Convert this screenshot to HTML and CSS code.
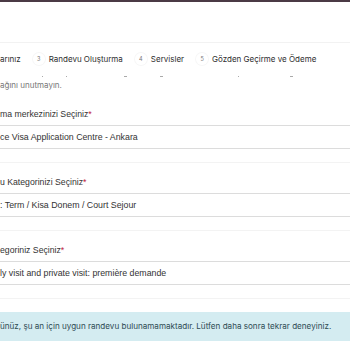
FILE: index.html
```html
<!DOCTYPE html>
<html>
<head>
<meta charset="utf-8">
<link rel="stylesheet" href="styles.css">
</head>
<body>
<div class="topbar"></div>
<div class="header"></div>
<div class="steps">
  <span class="step-label">arınız</span>
  <span class="step"><span class="num">3</span><span class="step-label">Randevu Oluşturma</span></span>
  <span class="step"><span class="num">4</span><span class="step-label">Servisler</span></span>
  <span class="step"><span class="num">5</span><span class="step-label">Gözden Geçirme ve Ödeme</span></span>
</div>
<div class="ticks">
  <span class="tick t1"></span><span class="tick t2"></span><span class="tick t3"></span><span class="tick t4"></span><span class="tick t5"></span><span class="tick t6"></span>
</div>
<div class="note">ağını unutmayın.</div>

<div class="field">
  <div class="label">ma merkezinizi Seçiniz<span class="req">*</span></div>
  <div class="select">ce Visa Application Centre - Ankara</div>
</div>
<div class="sep"></div>
<div class="field">
  <div class="label">u Kategorinizi Seçiniz<span class="req">*</span></div>
  <div class="select">: Term / Kisa Donem / Court Sejour</div>
</div>
<div class="sep"></div>
<div class="field">
  <div class="label">egoriniz Seçiniz<span class="req">*</span></div>
  <div class="select">ly visit and private visit: première demande</div>
</div>
<div class="sep"></div>
<div class="alert">ünüz, şu an için uygun randevu bulunamamaktadır. Lütfen daha sonra tekrar deneyiniz.</div>
</body>
</html>
```
FILE: styles.css
```css
html, body { margin: 0; padding: 0; background: #fff; }
body { width: 350px; height: 350px; overflow: hidden; font-family: Inter, "Liberation Sans", sans-serif; }
.topbar { height: 2px; background: #4b3a45; }
.header { height: 40px; border-bottom: 1px solid #f2f2f2; }
.steps { display: flex; align-items: center; height: 32px; font-size: 8px; color: #2e2e2e; white-space: nowrap; }
.step { display: flex; align-items: center; margin-left: 12px; }
.step:first-of-type { margin-left: 9px; }
.num { width: 12px; height: 12px; border-radius: 50%; font-size: 5.5px; color: #777; display: flex; align-items: center; justify-content: center; margin-right: 4px; box-shadow: 0 0 0 1px #f7f7f7; }
.ticks { position: relative; height: 3px; }
.tick { position: absolute; top: 1px; height: 1px; width: 3px; background: #aaa; }
.t1 { left: 42px; width: 1px; } .t2 { left: 124px; } .t3 { left: 160px; } .t4 { left: 238px; width: 1px; } .t5 { left: 290px; } .t6 { left: 66px; width: 1px; }
.note { font-size: 8px; color: #777; height: 14px; line-height: 14px; margin-bottom: 3px; }
.field { padding-top: 11px; font-family: "Liberation Sans", Arial, sans-serif; }
.label { font-size: 8.7px; color: #333; height: 16px; line-height: 16px; margin-bottom: 3px; }
.req { color: #c0213a; }
.select { border-top: 1px solid #dcdcdc; border-bottom: 1px solid #dcdcdc; height: 22px; line-height: 22px; font-size: 8.8px; color: #333; white-space: nowrap; }
.sep { height: 13px; border-bottom: 1px solid #f3f3f3; }
.alert { margin-top: 13px; background: #d4ecf1; color: #2e4b53; font-size: 8.1px; height: 29px; line-height: 29px; white-space: nowrap; }
```
